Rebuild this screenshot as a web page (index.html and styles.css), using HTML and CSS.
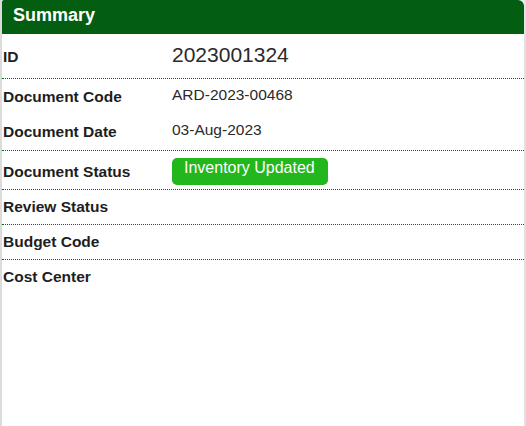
FILE: index.html
```html
<!DOCTYPE html>
<html>
<head>
<meta charset="utf-8">
<link rel="stylesheet" href="styles.css">
</head>
<body>
<div class="panel">
  <div class="panel-header">Summary</div>
  <div class="row row--id">
    <div class="label">ID</div>
    <div class="value value--id">2023001324</div>
  </div>
  <div class="row row--code">
    <div class="label">Document Code</div>
    <div class="value">ARD-2023-00468</div>
  </div>
  <div class="row row--date">
    <div class="label">Document Date</div>
    <div class="value">03-Aug-2023</div>
  </div>
  <div class="row row--status">
    <div class="label">Document Status</div>
    <div class="value value--badge"><span class="badge">Inventory Updated</span></div>
  </div>
  <div class="row">
    <div class="label">Review Status</div>
    <div class="value"></div>
  </div>
  <div class="row">
    <div class="label">Budget Code</div>
    <div class="value"></div>
  </div>
  <div class="row row--last">
    <div class="label">Cost Center</div>
    <div class="value"></div>
  </div>
</div>
</body>
</html>
```
FILE: styles.css
```css
html, body {
  margin: 0;
  padding: 0;
  background: #ffffff;
}

body {
  font-family: "Liberation Sans", Arial, sans-serif;
  color: #222222;
}

.panel {
  box-sizing: border-box;
  width: 526px;
  height: 426px;
  border-left: 2px solid #dcdcdc;
  border-right: 2px solid #e2e2e2;
  background: #ffffff;
  overflow: hidden;
}

.panel-header {
  height: 34px;
  box-sizing: border-box;
  padding: 0 0 4px 11px;
  line-height: 30px;
  background: #045e12;
  color: #ffffff;
  font-size: 18px;
  font-weight: bold;
  border-radius: 2px 6px 0 0;
}

.row {
  display: grid;
  grid-template-columns: 169px 1fr;
  align-items: center;
  padding: 7px 0 7px 1px;
  border-bottom: 1px dotted #006a08;
}

.label {
  font-size: 15.5px;
  font-weight: bold;
  line-height: 20px;
  color: #1e1e1e;
  white-space: nowrap;
}

.value {
  align-self: start;
  font-size: 15.5px;
  line-height: 16px;
  color: #2a2a2a;
  white-space: nowrap;
}

.row--id {
  padding-top: 13px;
  padding-bottom: 11px;
}

.value--id {
  font-size: 21px;
  line-height: 15px;
}

.row--code {
  padding-top: 8px;
  padding-bottom: 8px;
  border-bottom: none;
}

.row--date {
  padding-bottom: 8px;
}

.row--status {
  padding-top: 7px;
  padding-bottom: 4px;
}

.value--badge {
  line-height: 0;
}

.badge {
  display: inline-block;
  box-sizing: border-box;
  height: 27px;
  padding: 0 13px 7px 12px;
  line-height: 20px;
  font-size: 16px;
  color: #ffffff;
  background: #22b71c;
  border-radius: 5px;
}

.row--last {
  border-bottom: none;
}
```
